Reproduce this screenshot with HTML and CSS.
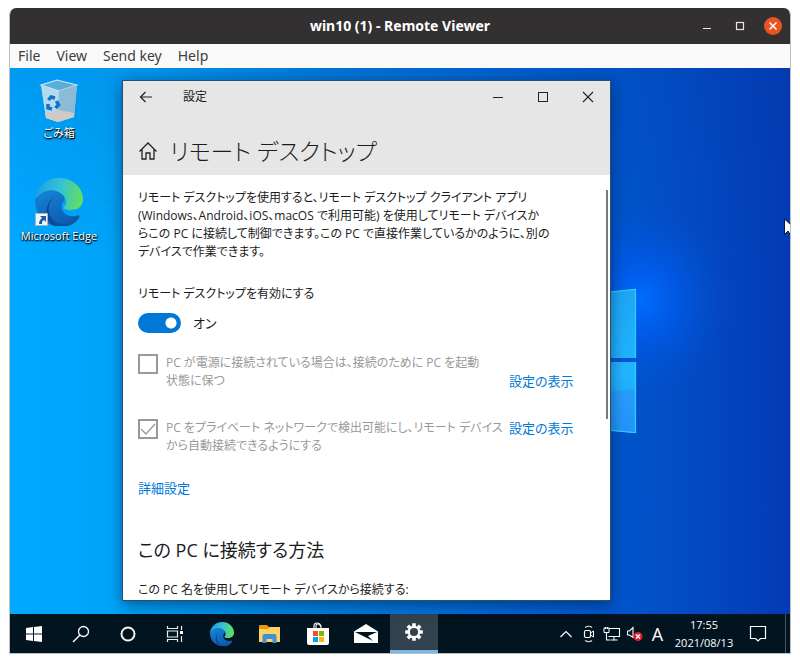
FILE: index.html
```html
<!DOCTYPE html>
<html lang="ja">
<head>
<meta charset="utf-8">
<meta name="viewport" content="width=device-width, initial-scale=1">
<title>win10 (1) - Remote Viewer</title>
<link rel="stylesheet" href="styles.css">
</head>
<body>
<svg class="defs" aria-hidden="true">
  <defs>
    <linearGradient id="edge-top" x1="0" y1="0.4" x2="1" y2="0.5">
      <stop offset="0" stop-color="#1c9ee0"/><stop offset="0.5" stop-color="#35c1d8"/><stop offset="1" stop-color="#62e05a"/>
    </linearGradient>
    <linearGradient id="edge-mid" x1="0" y1="0" x2="0.5" y2="1">
      <stop offset="0" stop-color="#1488d8"/><stop offset="1" stop-color="#0c5cb4"/>
    </linearGradient>
    <linearGradient id="edge-low" x1="0" y1="0.2" x2="1" y2="0.8">
      <stop offset="0" stop-color="#0f3f88"/><stop offset="1" stop-color="#1457a4"/>
    </linearGradient>
    <symbol id="edge" viewBox="0 0 48 48">
      <path fill="url(#edge-mid)" d="M0 22C2 12 10 9 18 11c8 1 13 7 11 12-2 2-3 4-2 8 2 6 8 9 17 6-4 7-12 11-20 11C11 48 0 37 0 22z"/>
      <path fill="url(#edge-low)" d="M19 19c-7 5-7 14-2 21 5 7 17 7 26-3 1-1 2 0 1 2-6 9-18 11-27 7-8-6-7-23 2-27z" transform="translate(0 1)"/>
      <path fill="url(#edge-top)" d="M0 22C2 8 12 0 24 0c14 0 24 10 24 21 0 8-6 11-12 11-5 0-8-1-7-3 3-3 3-8-1-12C20 9 7 11 0 22z"/>
    </symbol>
  </defs>
</svg>
<div class="viewer">
  <header class="titlebar">
    <h1 class="titlebar-text">win10 (1) - Remote Viewer</h1>
    <div class="titlebar-buttons">
      <button type="button" class="frame-button" aria-label="Minimize"><svg width="10" height="10"><path d="M1 7.5h8" stroke="#e8e8e8" stroke-width="1.2"/></svg></button>
      <button type="button" class="frame-button" aria-label="Maximize"><svg width="10" height="10"><rect x="1.5" y="1.5" width="7" height="7" fill="none" stroke="#e8e8e8" stroke-width="1.2"/></svg></button>
      <button type="button" class="frame-button frame-close" aria-label="Close"><svg width="10" height="10"><path d="M1.5 1.5l7 7M8.500 1.500l-7 7" stroke="#fff" stroke-width="1.500"/></svg></button>
    </div>
  </header>
  <nav class="menubar">
    <button type="button">File</button>
    <button type="button">View</button>
    <button type="button">Send key</button>
    <button type="button">Help</button>
  </nav>
  <main class="desktop">
    <svg class="wallpaper" viewBox="0 0 780 546" preserveAspectRatio="none" aria-hidden="true">
      <defs>
        <linearGradient id="pane" x1="0" y1="0" x2="0" y2="1"><stop offset="0" stop-color="#1ea6f4"/><stop offset="0.6" stop-color="#22b6ff"/><stop offset="1" stop-color="#1f9cf8"/></linearGradient>
        <radialGradient id="glow"><stop offset="0" stop-color="#006cff"/><stop offset="0.4" stop-color="#005cee" stop-opacity="0.700"/><stop offset="1" stop-color="#0050d0" stop-opacity="0"/></radialGradient>
      </defs>
      <ellipse cx="632" cy="232" rx="90" ry="100" fill="url(#glow)"/>
      <path d="M0 100L113 144" stroke="#35b8ff" stroke-opacity="0.200"/>
      <path d="M560 228L626 221V290H560zM560 294H626V365L560 359z" fill="url(#pane)"/>
      <path d="M560 327L626 321V365L560 359z" fill="#2a8dfa" fill-opacity="0.500"/>
      <path d="M560 228L625.500 221.500V290M625.500 294V364.500L560 359" fill="none" stroke="#2fd0ff" stroke-width="1.200"/>
    </svg>
    <div class="shortcuts">
      <a href="#bin" class="shortcut">
        <svg width="40" height="44" viewBox="0 0 40 44" aria-hidden="true">
          <path d="M2 6L17 12 38 6 35 38 19 43 7 39z" fill="#9ccbe6"/>
          <path d="M2 6L18 1 38 6 20 12z" fill="#5caed8" stroke="#d3ecf7" stroke-width="1.200"/>
          <path d="M2 6L20 12 19 43 7 39z" fill="#b4daee"/>
          <path d="M20 12L38 6 35 38 19 43z" fill="#8bbbd6"/>
          <path d="M6 34L20 31 35 34 35 38 19 43 7 39z" fill="#cfcac8"/>
          <g fill="none" stroke="#1272cc" stroke-width="3.500"><path d="M9.500 21l2.500-3 4 1"/><path d="M17.500 22l2 4-3 3"/><path d="M13 30l-4-1 0-4"/></g>
        </svg>
        <span>ごみ箱</span>
      </a>
      <a href="#edge-app" class="shortcut">
        <svg width="48" height="48" viewBox="0 0 48 48" aria-hidden="true">
          <use href="#edge"/>
          <rect x="0.500" y="35.500" width="12" height="12" fill="#f4f6f8" stroke="#9fb4c4"/>
          <path d="M5 38h6v6l-2-2c-2 1-2 2-2 4H4c0-3 1-4 3-6z" fill="#1c5aa8"/>
        </svg>
        <span>Microsoft Edge</span>
      </a>
    </div>
    <section class="settings" aria-label="設定">
      <div class="settings-head">
        <div class="settings-bar">
          <button type="button" class="bar-button" aria-label="戻る"><svg width="14" height="12"><path d="M13 6H2M6.500 1L1.500 6l5 5" fill="none" stroke="#222" stroke-width="1.200"/></svg></button>
          <span class="settings-name">設定</span>
          <button type="button" class="bar-button" aria-label="最小化"><svg width="12" height="12"><path d="M1 6.500h10" stroke="#222" stroke-width="1"/></svg></button>
          <button type="button" class="bar-button" aria-label="最大化"><svg width="12" height="12"><rect x="1.500" y="1.500" width="9" height="9" fill="none" stroke="#222" stroke-width="1"/></svg></button>
          <button type="button" class="bar-button" aria-label="閉じる"><svg width="12" height="12"><path d="M1 1l10 10M11 1L1 11" stroke="#222" stroke-width="1.100"/></svg></button>
        </div>
        <div class="settings-heading">
          <svg width="20" height="20" viewBox="0 0 20 20" aria-hidden="true"><path d="M1.500 10.500L10 2l8.500 8.500M4 8.500V18h4v-6h4v6h4V8.500" fill="none" stroke="#222" stroke-width="1.300"/></svg>
          <h2>リモート デスクトップ</h2>
        </div>
      </div>
      <div class="settings-body">
        <p class="intro">リモート デスクトップを使用すると、リモート デスクトップ クライアント アプリ<br>(Windows、Android、iOS、macOS で利用可能) を使用してリモート デバイスか<br>らこの PC に接続して制御できます。この PC で直接作業しているかのように、別の<br>デバイスで作業できます。</p>
        <p class="field-label" id="enable-label">リモート デスクトップを有効にする</p>
        <label class="toggle"><input type="checkbox" role="switch" checked aria-labelledby="enable-label"><span>オン</span></label>
        <div class="option">
          <input type="checkbox" id="awake" disabled>
          <label for="awake">PC が電源に接続されている場合は、接続のために PC を起動<br>状態に保つ</label>
          <a href="#power" class="option-low">設定の表示</a>
        </div>
        <div class="option">
          <input type="checkbox" id="discover" checked disabled>
          <label for="discover">PC をプライベート ネットワークで検出可能にし、リモート デバイス<br>から自動接続できるようにする</label>
          <a href="#network">設定の表示</a>
        </div>
        <a href="#advanced" class="advanced">詳細設定</a>
        <h3>この PC に接続する方法</h3>
        <p class="connect">この PC 名を使用してリモート デバイスから接続する:</p>
        <div class="scrollbar"></div>
      </div>
    </section>
    <svg class="cursor" width="6" height="18" viewBox="0 0 6 18" aria-hidden="true"><path d="M0.500 1V16.500L4 13l3 5V7z" fill="#fff" stroke="#0a1440"/></svg>
  </main>
  <footer class="taskbar">
    <div class="tasks">
      <button type="button" aria-label="スタート"><svg width="16" height="16"><path d="M0 2l7-1v6.500H0zM8 1l8-1v7.500H8zM0 8.500h7V15l-7-1zM8 8.500h8V16l-8-1z" fill="#fff"/></svg></button>
      <button type="button" aria-label="検索"><svg width="18" height="18"><circle cx="11.500" cy="6.500" r="5" fill="none" stroke="#fff" stroke-width="1.300"/><path d="M8 10l-7 7" stroke="#fff" stroke-width="1.400"/></svg></button>
      <button type="button" aria-label="Cortana"><svg width="16" height="16"><circle cx="8" cy="8" r="6.500" fill="none" stroke="#f4f4f4" stroke-width="2"/></svg></button>
      <button type="button" aria-label="タスク ビュー"><svg width="18" height="16"><path d="M1.500 0v2.500h10V0M1.500 16v-2.500h10V16M1.500 5h10v6h-10zM15.500 0v4M15.500 10v6" fill="none" stroke="#e8eef0" stroke-width="1.200"/><path d="M14 5h3v3h-3z" fill="#fff"/></svg></button>
    </div>
    <div class="apps">
      <button type="button" aria-label="Microsoft Edge"><svg width="24" height="24"><use href="#edge"/></svg></button>
      <button type="button" aria-label="エクスプローラー"><svg width="22" height="18"><path d="M0 1q0-1 1-1h7l2 2h11v3H0z" fill="#e19a12"/><path d="M0 4h9l2-2h10v15H0z" fill="#ffd262"/><path d="M3.500 18V11q0-2 2-2h10q2 0 2 2v7h-4v-4h-6v4z" fill="#3f91d4"/></svg></button>
      <button type="button" aria-label="Microsoft Store"><svg width="24" height="24"><path d="M8 6V4q0-3 3-3t4 3v2M10 6V4q0-2 2-2t3 3" fill="none" stroke="#e8eaec" stroke-width="1.200"/><path d="M1 6h22v15q0 2-2 2H3q-2 0-2-2z" fill="#fff"/><path d="M7 9h5v5H7z" fill="#f25022"/><path d="M13 9h5v5h-5z" fill="#7fba00"/><path d="M7 15h5v5H7z" fill="#00a4ef"/><path d="M13 15h5v5h-5z" fill="#ffb900"/></svg></button>
      <button type="button" aria-label="メール"><svg width="24" height="20"><path d="M0 7.500L12 0l12 7.500V19H0z" fill="#fff"/><path d="M1 8h22l-9 4 5 5L5 10z" fill="#021420"/></svg></button>
      <button type="button" class="active" aria-label="設定"><svg width="20" height="20" viewBox="-10 -10 20 20"><g stroke="#fff" stroke-width="3.600"><path d="M0-8.800V-5M0 5V8.800M-8.800 0H-5M5 0H8.800M-6.200-6.200L-3.500-3.500M3.500 3.500L6.200 6.200M-6.200 6.200L-3.500 3.500M3.500-3.500L6.200-6.200"/></g><circle r="5.200" fill="#33424f" stroke="#fff" stroke-width="2.200"/></svg></button>
    </div>
    <div class="tray">
      <button type="button" aria-label="隠れているインジケーター"><svg width="14" height="8"><path d="M1.500 7L7 1.500 12.500 7" fill="none" stroke="#fff" stroke-width="1.200"/></svg></button>
      <button type="button" aria-label="カメラ"><svg width="12" height="18"><path d="M2 2.500q4-2.500 7 0M2 15.500q4 2.500 7 0" fill="none" stroke="#ddd" stroke-width="1.200"/><rect x="1.500" y="5.500" width="6" height="7" rx="1.500" fill="none" stroke="#fff" stroke-width="1.200"/><path d="M7.500 8l3-2v6l-3-2" fill="none" stroke="#fff"/></svg></button>
      <button type="button" aria-label="ネットワーク"><svg width="18" height="14"><path d="M5 1.500h11.500v8H5.500M11 9.500V13M7.500 13h7M3.500 6v7H7" fill="none" stroke="#fff" stroke-width="1.100"/><path d="M1 1h5v4.500H1z" fill="#021420" stroke="#fff"/><path d="M2.500 0v2M4.500 0v2" stroke="#fff"/></svg></button>
      <button type="button" aria-label="音量"><svg width="18" height="16"><path d="M1.500 5h2L7 1.500v10L3.500 9h-2z" fill="none" stroke="#fff" stroke-width="1.100"/><circle cx="12" cy="10.500" r="4.500" fill="#e0202c"/><path d="M10 8.500l4 4M14 8.500l-4 4" stroke="#fff" stroke-width="1.200"/></svg></button>
      <button type="button" class="ime">A</button>
      <button type="button" class="clock"><time>17:55</time><time>2021/08/13</time></button>
      <button type="button" class="notice" aria-label="通知"><svg width="18" height="18"><path d="M1.500 1.500h15v12H11.500L9 16l-2.500-2.500h-5z" fill="none" stroke="#fff" stroke-width="1.200"/></svg></button>
    </div>
  </footer>
</div>
</body>
</html>
```
FILE: styles.css
```css
* { box-sizing: border-box; }

body {
  margin: 0;
  min-height: 100vh;
  padding: 8px 9px 9px;
  display: flex;
  background: #fff;
  color: #1c1c1c;
  font-family: "Open Sans", "Noto Sans CJK JP", sans-serif;
  font-size: 13px;
  line-height: 18px;
}

h1, h2, h3, p { margin: 0; font-weight: 400; }
a { color: #0078d7; text-decoration: none; }
button { border: 0; padding: 0; background: none; color: inherit; font: inherit; }
svg { display: block; flex: none; }
.defs { position: absolute; width: 0; height: 0; }

.viewer {
  flex: 1;
  display: flex;
  flex-direction: column;
  overflow: hidden;
  border: solid #bdbdbd;
  border-width: 0 1px 1px;
  border-radius: 7px 7px 0 0;
}

.titlebar {
  display: grid;
  grid-template-columns: 1fr auto 1fr;
  align-items: center;
  height: 36px;
  background: #333031;
  color: #fff;
}
.titlebar-text { grid-column: 2; font: 700 14px/20px "Noto Sans", sans-serif; }
.titlebar-buttons { display: flex; justify-content: flex-end; gap: 15px; padding-right: 8px; }
.frame-button { display: grid; place-items: center; width: 18px; height: 18px; border-radius: 50%; }
.frame-close { background: #e95420; }

.menubar {
  display: flex;
  gap: 16px;
  height: 24px;
  padding: 0 8px;
  background: #fafafa;
  color: #3d3d3d;
  font: 14px/24px "Noto Sans", sans-serif;
}

.desktop {
  position: relative;
  flex: 1;
  display: grid;
  grid-template-columns: 112px 1fr 179px;
  padding: 12px 0 13px;
  background:
    linear-gradient(180deg, rgba(0, 50, 150, 0.12), rgba(0, 50, 150, 0) 35%),
    linear-gradient(90deg, #00a9ff 0, #00a4f8 14%, #0080e0 40%, #0058cc 76%, #034cc4 86%, #033bb4 100%);
}
.wallpaper { position: absolute; inset: 0; width: 100%; height: 100%; }

.shortcuts { position: relative; display: flex; flex-direction: column; gap: 36px; padding: 0 14px 0 0; margin-top: -1px; }
.shortcut {
  display: flex;
  flex-direction: column;
  align-items: center;
  color: #fff;
  font-size: 11px;
  line-height: 18px;
  white-space: nowrap;
  text-shadow: 0 1px 2px #000, 1px 1px 1px #000;
}
.shortcut span { margin-top: 1px; font-feature-settings: "palt"; }

.settings {
  position: relative;
  display: flex;
  flex-direction: column;
  height: 521px;
  overflow: hidden;
  border: 1px solid #27506f;
  background: #fff;
  box-shadow: 0 4px 14px rgba(0, 20, 60, 0.5);
  font-feature-settings: "palt";
}
.settings-head { background: #e6e6e6; height: 94px; }
.settings-bar { display: flex; height: 32px; align-items: center; }
.bar-button { display: grid; place-items: center; width: 45px; height: 32px; }
.settings-name { flex: 1; padding-left: 15px; font-size: 12px; }
.settings-heading { display: flex; align-items: center; gap: 12px; padding: 20px 15px 0; }
.settings-heading h2 { font-size: 23px; line-height: 36px; font-weight: 300; }

.settings-body { position: relative; padding: 14px 15px 0; }
.intro, .field-label, .option label, .connect { font-size: 12px; }
.intro { white-space: nowrap; }
.field-label { margin-top: 24px; }
.toggle { display: flex; align-items: center; gap: 12px; height: 20px; margin-top: 10px; }
.toggle input {
  appearance: none;
  width: 43px;
  height: 20px;
  margin: 0;
  border-radius: 10px;
  background: radial-gradient(circle at 33px 50%, #fff 5px, transparent 6px) #0078d7;
}
.option { display: grid; grid-template-columns: 20px 331px auto; gap: 0 8px; justify-content: start; margin-top: 21px; }
.option + .option { margin-top: 29px; }
.option label { color: #999; white-space: nowrap; }
.option a { margin-left: 4px; }
.option-low { align-self: end; }
.option input { appearance: none; width: 20px; height: 20px; margin: 0; border: 2px solid #999; }
.option input:checked {
  background: no-repeat center url("data:image/svg+xml,%3Csvg xmlns='http://www.w3.org/2000/svg' width='16' height='16'%3E%3Cpath d='M1 8l5 5L15 3' fill='none' stroke='%23999' stroke-width='1.3'/%3E%3C/svg%3E");
}
.advanced { display: block; margin-top: 24px; }
.settings-body h3 { margin-top: 40px; font-size: 18px; line-height: 26px; }
.connect { margin-top: 18px; }
.scrollbar { position: absolute; top: 15px; right: 2px; width: 2px; height: 229px; background: #7a7a7a; }
.cursor { position: absolute; right: 0; top: 150px; }

.taskbar { display: flex; justify-content: space-between; height: 39px; background: #021420; color: #fff; }
.tasks, .apps, .tray { display: flex; }
.taskbar button { display: grid; place-items: center; }
.tasks button { width: 47px; }
.apps { margin-right: auto; }
.apps button { width: 48px; }
.apps .active { background: #33424f; border-bottom: 3px solid #76b9ed; }
.tray { border-right: 1px solid #46525c; margin-right: 4px; }
.tray button { width: 23px; }
.tray .ime { font-size: 18px; }
.tray .clock { width: 70px; align-content: center; font-size: 11px; line-height: 18px; }
.tray .notice { width: 46px; padding-right: 8px; }
```
